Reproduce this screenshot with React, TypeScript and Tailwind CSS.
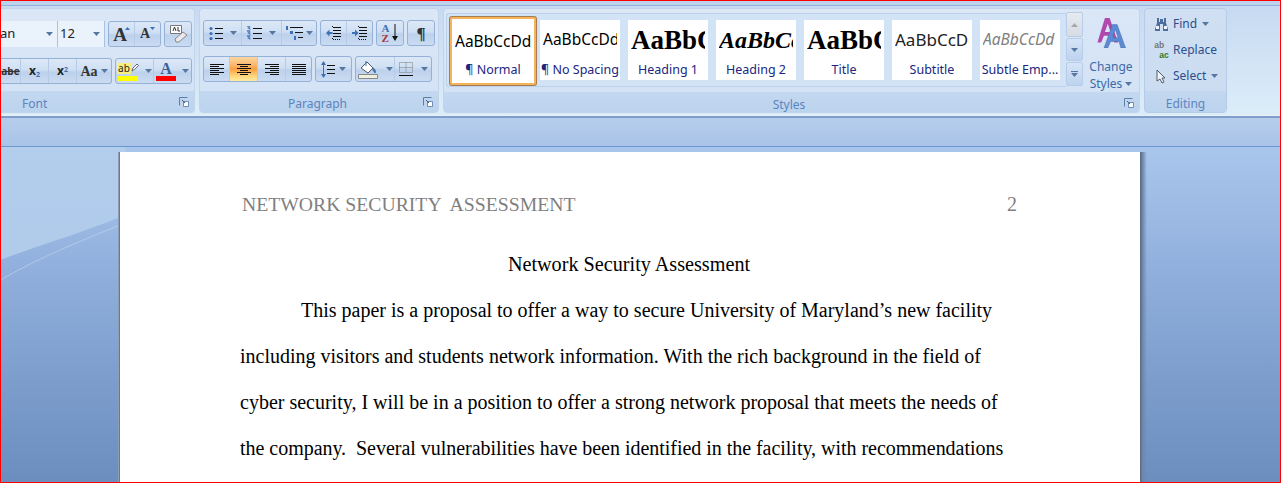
import React from "react";

const ui = "font-['Noto_Sans','Open_Sans',sans-serif]";
const serif = "font-['Liberation_Serif',serif]";

function Caret({ className = "" }: { className?: string }) {
  return (
    <svg width="7" height="4" viewBox="0 0 7 4" className={className}>
      <path d="M0 0h7L3.5 4z" fill="#56779f" />
    </svg>
  );
}

function Launcher() {
  return (
    <svg width="10" height="10" viewBox="0 0 10 10" className="shrink-0 -mt-[3px]">
      <path d="M.5.5h8M.5.5v8" stroke="#5c7ea8" fill="none" />
      <path d="M4.500 4.500h5v5h-5z" fill="#fff" stroke="#6f8db5" />
      <path d="M3 3l3 3" stroke="#34578a" />
    </svg>
  );
}

function Seg({ w, children, active = false, last = false }: { w: string; children: React.ReactNode; active?: boolean; last?: boolean }) {
  return (
    <div
      className={`${w} h-full flex items-center justify-center gap-[3px] ${
        active
          ? "bg-[linear-gradient(#fbd7a0_0%,#fbb56a_35%,#fc9f3e_50%,#fdd77e_80%,#ffeba0_100%)]"
          : ""
      } ${last ? "" : "border-r border-[#b5cbe6]"}`}
    >
      {children}
    </div>
  );
}

function Group({ children, w, h = "h-[26px]" }: { children: React.ReactNode; w: string; h?: string }) {
  return (
    <div
      className={`${w} ${h} flex shrink-0 rounded-[3px] border border-[#95b1d6] overflow-hidden bg-[linear-gradient(#dce8f7_0%,#cfdff3_45%,#bcd1ec_55%,#cbdcf2_100%)]`}
    >
      {children}
    </div>
  );
}

function Lines({ kind }: { kind: "left" | "center" | "right" | "justify" }) {
  const rows = [0, 1, 2, 3, 4, 5];
  const pick = (i: number) => {
    const long = i % 2 === 0;
    if (kind === "justify") return [0, 14];
    if (kind === "left") return [0, long ? 14 : 9];
    if (kind === "right") return [long ? 0 : 5, 14];
    return [long ? 0 : 3, long ? 14 : 11];
  };
  return (
    <svg width="14" height="11" viewBox="0 0 14 11">
      {rows.map((i) => (
        <path key={i} d={`M${pick(i)[0]} ${i * 2 + 0.5}H${pick(i)[1]}`} stroke="#111" strokeWidth="1" />
      ))}
    </svg>
  );
}

function BulletIcon() {
  return (
    <svg width="14" height="14" viewBox="0 0 14 14">
      {[2.5, 7.5, 12.5].map((y) => (
        <g key={y}>
          <circle cx="2" cy={y} r="1.6" fill="#3f6fb5" />
          <path d={`M6 ${y}H14`} stroke="#111" />
        </g>
      ))}
    </svg>
  );
}

function NumberIcon() {
  return (
    <svg width="15" height="14" viewBox="0 0 15 14">
      {[2.5, 7.5, 12.5].map((y) => (
        <g key={y}>
          <path d={`M0 ${y - 2}h3v1H1v1h2v2H0`} fill="none" stroke="#3f6fb5" strokeWidth=".7" />
          <path d={`M6 ${y}H15`} stroke="#111" />
        </g>
      ))}
    </svg>
  );
}

function MultiIcon() {
  return (
    <svg width="17" height="14" viewBox="0 0 17 14">
      <path d="M0 0h2v4H0zM4 5h3v3H4zM8 10h2v4H8z" fill="#3f6fb5" />
      <path d="M4 1.500H17M9 6.500H17M12 11.500H17" stroke="#111" />
    </svg>
  );
}

function IndentIcon({ flip = false }: { flip?: boolean }) {
  return (
    <svg width="16" height="14" viewBox="0 0 16 14">
      <path d="M7 1.500h8M7 4.500h8M7 7.500h8M7 10.500h8" stroke="#111" />
      <path d="M6.500 0v2M6.500 12v2" stroke="#111" strokeDasharray="1 1" />
      <path d="M7 13.500h8" stroke="#111" strokeDasharray="1 1" />
      {flip ? (
        <path d="M0 6h3V3.500L6.500 7 3 10.500V8H0z" fill="#3f6fb5" />
      ) : (
        <path d="M6.500 6h-3V3.500L0 7l3.500 3.500V8h3z" fill="#3f6fb5" />
      )}
    </svg>
  );
}

function Band({ children, className = "" }: { children: React.ReactNode; className?: string }) {
  return (
    <div className={`h-[21px] pt-[4px] shrink-0 flex items-center bg-[linear-gradient(#c3d8f0,#bcd3ee)] ${className}`}>{children}</div>
  );
}

function FontGroup() {
  return (
    <div className="w-[194px] h-[105px] shrink-0 flex flex-col rounded-r-[4px] border border-l-0 border-[#c2d4ea] bg-[linear-gradient(#dbe7f7,#d3e2f5_85%)] overflow-hidden">
      <div className="flex-1 flex flex-col justify-start items-end pr-[2px] pt-[12px]">
        <div className="flex gap-[3px] h-[26px] items-start">
          <div className="w-[57px] h-[26px] flex items-center justify-between pr-[4px] bg-[#eaf2fc] border-r border-[#a9c2e1] overflow-hidden">
            <span className={`${ui} text-[13px] text-[#222] -ml-[1px]`}>an</span>
            <Caret />
          </div>
          <div className="w-[47px] h-[26px] -ml-[3px] flex items-center justify-between px-[2px] pr-[4px] bg-[#eaf2fc] border-r border-[#a9c2e1]">
            <span className={`${ui} text-[13px] text-[#222]`}>12</span>
            <Caret />
          </div>
          <Group w="w-[53px]">
            <Seg w="w-[26px]">
              <span className={`${serif} text-[19px] font-bold text-[#333] leading-none relative`}>A</span>
              <svg width="5" height="3" viewBox="0 0 5 3" className="-mt-[12px] -ml-[5px]"><path d="M0 3h5L2.500 0z" fill="#3f6fb5" /></svg>
            </Seg>
            <Seg w="flex-1" last>
              <span className={`${serif} text-[14px] font-bold text-[#333] leading-none`}>A</span>
              <svg width="5" height="3" viewBox="0 0 5 3" className="-mt-[12px] -ml-[3px]"><path d="M0 0h5L2.500 3z" fill="#3f6fb5" /></svg>
            </Seg>
          </Group>
          <Group w="w-[28px]">
            <Seg w="w-full" last>
              <svg width="20" height="20" viewBox="0 0 20 20">
                <path d="M2.500 1.500h11v8h-11z" fill="#fff" stroke="#777" />
                <path d="M7 15l8-7 4 3-8 7H8z" fill="#e8e8ee" stroke="#888" />
                <path d="M5 7l1.500-4L8 7M10 3v4h2" fill="none" stroke="#333" />
              </svg>
            </Seg>
          </Group>
        </div>
        <div className="flex gap-[3px] h-[26px] mt-[11px] items-start">
          <div className="w-[111px] h-[26px] flex rounded-r-[3px] border border-l-0 border-[#95b1d6] overflow-hidden bg-[linear-gradient(#dce8f7_0%,#cfdff3_45%,#bcd1ec_55%,#cbdcf2_100%)]">
            <Seg w="w-[20px]">
              <span className={`${ui} text-[10px] font-bold text-[#333] line-through`}>abe</span>
            </Seg>
            <Seg w="w-[28px]">
              <span className={`${ui} text-[12px] font-bold text-[#222] leading-none`}>x<sub className="text-[7px] text-[#3f6fb5]">2</sub></span>
            </Seg>
            <Seg w="w-[28px]">
              <span className={`${ui} text-[12px] font-bold text-[#222] leading-none`}>x<sup className="text-[7px] text-[#3f6fb5]">2</sup></span>
            </Seg>
            <Seg w="flex-1" last>
              <span className={`${serif} text-[14px] font-bold text-[#333]`}>Aa</span>
              <Caret />
            </Seg>
          </div>
          <Group w="w-[77px]">
            <Seg w="w-[38px]">
              <div className="flex flex-col items-center">
                <div className="flex items-center h-[13px]">
                  <span className={`${ui} text-[10px] leading-[11px] h-[11px] text-[#222] bg-[#f6ee7e] px-[1px]`}>ab</span>
                  <svg width="8" height="10" viewBox="0 0 8 10"><path d="M1 8l1-3 4-4 1.500 1.500-4 4z" fill="#fff" stroke="#667" /></svg>
                </div>
                <div className="w-[20px] h-[5px] bg-[#ffff00] mt-[1px]" />
              </div>
              <Caret className="ml-[3px]" />
            </Seg>
            <Seg w="flex-1" last>
              <div className="flex flex-col items-center">
                <span className={`${serif} text-[16px] leading-[13px] h-[14px] font-bold text-[#3a5f96]`}>A</span>
                <div className="w-[20px] h-[5px] bg-[#ff0000]" />
              </div>
              <Caret className="ml-[3px]" />
            </Seg>
          </Group>
        </div>
      </div>
      <Band className="justify-between pl-[21px] pr-[5px]">
        <span className={`${ui} text-[12px] text-[#5b85bd]`}>Font</span>
        <Launcher />
      </Band>
    </div>
  );
}

function ParagraphGroup() {
  return (
    <div className="w-[240px] h-[105px] shrink-0 flex flex-col rounded-[4px] border border-[#c2d4ea] bg-[linear-gradient(#dbe7f7,#d3e2f5_85%)] overflow-hidden">
      <div className="flex-1 pl-[3px] pt-[11px] flex flex-col gap-[10px]">
        <div className="flex gap-[3px]">
          <Group w="w-[114px]">
            <Seg w="w-[38px]"><BulletIcon /><Caret className="ml-[4px]" /></Seg>
            <Seg w="w-[40px]"><NumberIcon /><Caret className="ml-[4px]" /></Seg>
            <Seg w="flex-1" last><MultiIcon /><Caret /></Seg>
          </Group>
          <Group w="w-[53px]">
            <Seg w="w-[26px]"><IndentIcon /></Seg>
            <Seg w="flex-1" last><IndentIcon flip /></Seg>
          </Group>
          <Group w="w-[28px]">
            <Seg w="w-full" last>
              <div className={`${serif} flex flex-col text-[11px] font-bold leading-[10px]`}>
                <span className="text-[#3f6fb5]">A</span>
                <span className="text-[#a33]">Z</span>
              </div>
              <svg width="6" height="18" viewBox="0 0 6 18"><path d="M3 0v15" stroke="#111" /><path d="M0 12h6l-3 5z" fill="#111" /></svg>
            </Seg>
          </Group>
          <Group w="w-[28px]">
            <Seg w="w-full" last>
              <span className={`${serif} text-[17px] font-bold text-[#333] leading-none`}>¶</span>
            </Seg>
          </Group>
        </div>
        <div className="flex gap-[3px]">
          <Group w="w-[109px]">
            <Seg w="w-[26px]"><Lines kind="left" /></Seg>
            <Seg w="w-[28px]" active><Lines kind="center" /></Seg>
            <Seg w="w-[28px]"><Lines kind="right" /></Seg>
            <Seg w="flex-1" last><Lines kind="justify" /></Seg>
          </Group>
          <Group w="w-[37px]">
            <Seg w="w-full" last>
              <svg width="14" height="17" viewBox="0 0 14 17">
                <path d="M2.500 0L0 4h5zM2.500 17L0 13h5z" fill="#3f6fb5" />
                <path d="M2.500 3v11" stroke="#3f6fb5" />
                <path d="M6 4.500h8M6 8.500h8M6 12.500h8" stroke="#111" />
              </svg>
              <Caret className="ml-[1px]" />
            </Seg>
          </Group>
          <Group w="w-[77px]">
            <Seg w="w-[39px]">
              <svg width="20" height="19" viewBox="0 0 20 19">
                <path d="M3 8l6-6 6 6-5 5z" fill="#fff" stroke="#555" />
                <path d="M8 1v5M15 8c2 1 3 3 2 5l-2-3z" fill="#3f6fb5" stroke="#3f6fb5" />
                <path d="M.5 14.500h19v4H.5z" fill="#efefe0" stroke="#888" />
              </svg>
              <Caret className="ml-[5px]" />
            </Seg>
            <Seg w="flex-1" last>
              <svg width="14" height="14" viewBox="0 0 14 14">
                <path d="M.5.5h13v10H.5zM7 .5v10M.5 5.500h13" stroke="#7a7a7a" strokeDasharray="1 1" fill="none" />
                <path d="M0 13.500h14" stroke="#111" />
              </svg>
              <Caret className="ml-[5px]" />
            </Seg>
          </Group>
        </div>
      </div>
      <Band className="pr-[5px]">
        <span className={`${ui} flex-1 text-center pl-[12px] text-[12px] text-[#5b85bd]`}>Paragraph</span>
        <Launcher />
      </Band>
    </div>
  );
}

function Sample({ name, cls, sample, w = "w-[80px]", active = false }: { name: string; cls: string; sample: string; w?: string; active?: boolean }) {
  return (
    <div
      className={`${w} shrink-0 flex flex-col overflow-hidden bg-white ${
        active
          ? "h-[68px] border-2 border-[#f5b45c] rounded-[2px] shadow-[0_0_0_1px_#a57d50]"
          : "h-[60px]"
      }`}
    >
      <div className={`h-[42px] mx-[3px] flex items-center overflow-hidden whitespace-nowrap ${active ? "mt-[2px]" : "mt-[-1px]"}`}>
        <span className={`block w-full overflow-hidden ${cls}`}>{sample}</span>
      </div>
      <div className={`${ui} text-[12.500px] leading-[16px] text-center text-[#20267f] whitespace-nowrap ${active ? "-mt-[1px]" : "mt-[1px]"}`}>{name}</div>
    </div>
  );
}

function ScrollBtn({ h, children, light = false }: { h: string; children: React.ReactNode; light?: boolean }) {
  return (
    <div className={`${h} w-[17px] flex flex-col gap-[1px] items-center justify-center rounded-[2px] border border-[#b6cce8] ${light ? "bg-[linear-gradient(#e6ebf0,#d6dce4)]" : "bg-[linear-gradient(#d6e4f6,#bdd3ef)]"}`}>
      {children}
    </div>
  );
}

function StylesGroup() {
  return (
    <div className="w-[697px] h-[105px] shrink-0 flex flex-col rounded-[4px] border border-[#c2d4ea] bg-[linear-gradient(#dbe7f7,#d3e2f5_85%)] overflow-hidden">
      <div className="flex-1 flex pl-[2px] pt-[4px]">
        <div className="w-[620px] h-[74px] flex shrink-0 items-start pl-[3px] pt-[3px] gap-[8px] bg-[#d3e3f6] border border-[#bbd0e9] border-r-0 rounded-l-[3px]">
          <Sample active w="w-[86px]" name="¶ Normal" cls={`${ui} text-[15.500px] text-black`} sample="AaBbCcDd" />
          <div className="flex gap-[8px] pt-[3px] -ml-[4px]">
            <Sample name="¶ No Spacing" cls={`${ui} text-[15.500px] text-black`} sample="AaBbCcDd" />
            <Sample name="Heading 1" cls={`${serif} text-[27px] font-bold text-black`} sample="AaBbCc" />
            <Sample name="Heading 2" cls={`${serif} text-[24px] font-bold italic text-black`} sample="AaBbCcDd" />
            <Sample name="Title" cls={`${serif} text-[27px] font-bold text-black`} sample="AaBbCc" />
            <Sample name="Subtitle" cls={`${ui} text-[17px] text-[#222]`} sample="AaBbCcDd" />
            <Sample name="Subtle Emp..." cls={`${ui} text-[15.500px] italic text-[#808080]`} sample="AaBbCcDd" />
          </div>
        </div>
        <div className="flex flex-col shrink-0 gap-[1px] -mt-[1px]">
          <ScrollBtn h="h-[25px]" light><svg width="7" height="4" viewBox="0 0 7 4"><path d="M0 4h7L3.500 0z" fill="#a6a8aa" /></svg></ScrollBtn>
          <ScrollBtn h="h-[23px]"><Caret /></ScrollBtn>
          <ScrollBtn h="h-[24px]"><div className="w-[7px] h-[1px] bg-[#56779f]" /><Caret /></ScrollBtn>
        </div>
        <div className="flex-1 flex flex-col items-center pt-[5px]">
          <svg width="31" height="30" viewBox="0 0 32 32">
            <path d="M9 0h5l9 26h-4l-2-7H8l-3 7H1zM9 15h6L12 6z" fill="#b049ad" />
            <path d="M17 7h5l9 25h-5l-2-7h-9l-3 7h-4zM17 21h6l-3-9z" fill="#5b8bd6" stroke="#41689f" strokeWidth=".500" />
          </svg>
          <div className={`${ui} text-[12px] leading-[17px] text-[#3d6aa8] text-center mt-[10px]`}>Change</div>
          <div className="flex items-center gap-[3px]">
            <span className={`${ui} text-[12px] leading-[17px] text-[#3d6aa8]`}>Styles</span>
            <Caret />
          </div>
        </div>
      </div>
      <Band className="pr-[5px]">
        <span className={`${ui} flex-1 text-center pl-[10px] text-[12px] text-[#5b85bd]`}>Styles</span>
        <Launcher />
      </Band>
    </div>
  );
}

function EditRow({ icon, label, caret = false }: { icon: React.ReactNode; label: string; caret?: boolean }) {
  return (
    <div className="h-[26px] flex items-center pl-[8px]">
      <div className="w-[16px] h-[16px] flex items-center justify-center mr-[4px]">{icon}</div>
      <span className={`${ui} text-[12px] text-[#2a4f8d]`}>{label}</span>
      {caret && <Caret className="ml-[5px]" />}
    </div>
  );
}

function EditingGroup() {
  return (
    <div className="w-[83px] h-[105px] shrink-0 flex flex-col rounded-[4px] border border-[#b6cce6] bg-[linear-gradient(#d0dff2,#cbdcf1)] overflow-hidden">
      <div className="flex-1 pt-[2px]">
        <EditRow caret label="Find" icon={
          <svg width="15" height="13" viewBox="0 0 15 13"><path d="M3 0h2v4h1V1h3v3h1V0h2v5l2 6v2H9V6H6v7H1v-2l2-6z" fill="#4d6f9d" /><path d="M2 8h3v3H2zM10 8h3v3h-3z" fill="#f1f5fb" /></svg>
        } />
        <EditRow label="Replace" icon={
          <div className="font-['Liberation_Sans',sans-serif] flex flex-col font-bold text-[8.500px] leading-[10px]"><span className="text-[#777] pl-[1px]">ab</span><span className="text-[#2b7a2b] pl-[6px]">ac</span></div>
        } />
        <EditRow caret label="Select" icon={
          <svg width="11" height="15" viewBox="0 0 11 15"><path d="M1 1v11l3-2 2 4 2-1-2-4h3z" fill="#eef3fa" stroke="#555d68" /></svg>
        } />
      </div>
      <Band className="justify-center">
        <span className={`${ui} text-[12px] text-[#5b85bd]`}>Editing</span>
      </Band>
    </div>
  );
}

function DocLine({ children, indent = false, spacing = "" }: { children: React.ReactNode; indent?: boolean; spacing?: string }) {
  return (
    <p className={`h-[46px] leading-[46px] whitespace-pre text-[20px] text-black ${indent ? "pl-[61px]" : ""} ${spacing}`}>{children}</p>
  );
}

export default function App() {
  return (
    <div className="w-full h-[483px] overflow-hidden box-border border border-[#ff0000] flex flex-col bg-[#c0d5ee]">
      <div className="h-[115px] shrink-0 flex flex-col bg-[linear-gradient(#c6d9f1,#dcedf9)] border-b-[1px] border-[#e4f3f9]">
        <div className="h-[5px] shrink-0 bg-[#bcd2ed] border-b border-[#92b2da]" />
        <div className="flex gap-[4px] mt-[2px]">
          <FontGroup />
          <ParagraphGroup />
          <StylesGroup />
          <EditingGroup />
        </div>
      </div>
      <div className="h-[31px] shrink-0 bg-[linear-gradient(#b6cdec,#a9c4e8)] border-t-[2px] border-b border-t-[#7f9dc8] border-b-[#6c97cc]" />
      <div className="relative flex-1 flex pl-[119px] pt-[5px] bg-[linear-gradient(#a9c7ec_0%,#8eaddb_40%,#6b8ebe_100%)] overflow-hidden">
        <svg className="absolute inset-0 w-full h-full" viewBox="0 0 1281 336" preserveAspectRatio="none">
          <path d="M0 113C40 98 85 85 125 68V0H0z" fill="#b4cdec" opacity=".9" />
          <path d="M0 133C40 110 85 92 125 76" fill="none" stroke="#bdd2ee" opacity=".7" />
        </svg>
        <div className="relative -ml-[2px] w-[2px] h-[340px] bg-[linear-gradient(90deg,#9fb2cc,#55657c)]" />
        <div className={`relative w-[1020px] h-[340px] bg-white pl-[120px] pt-[43px] ${serif}`}>
          <div className="flex w-[777px] justify-between -mt-[3px] leading-[24px] text-[#7f7f7f]">
            <span className="text-[19.700px] whitespace-pre ml-[2px]">NETWORK SECURITY  ASSESSMENT</span>
            <span className="text-[20px]">2</span>
          </div>
          <div className="w-[778px] mt-[36px] text-center text-[20.200px] leading-[24px] text-black">Network Security Assessment</div>
          <div className="mt-[11px]">
            <DocLine indent>This paper is a proposal to offer a way to secure University of Maryland’s new facility</DocLine>
            <DocLine>including visitors and students network information. With the rich background in the field of</DocLine>
            <DocLine>cyber security, I will be in a position to offer a strong network proposal that meets the needs of</DocLine>
            <DocLine spacing="tracking-[-0.03px]">the company.  Several vulnerabilities have been identified in the facility, with recommendations</DocLine>
          </div>
        </div>
        <div className="relative w-[7px] h-[340px] bg-[linear-gradient(90deg,#57687f,#6e86a9_35%,#90aedb00)]" />
      </div>
    </div>
  );
}
